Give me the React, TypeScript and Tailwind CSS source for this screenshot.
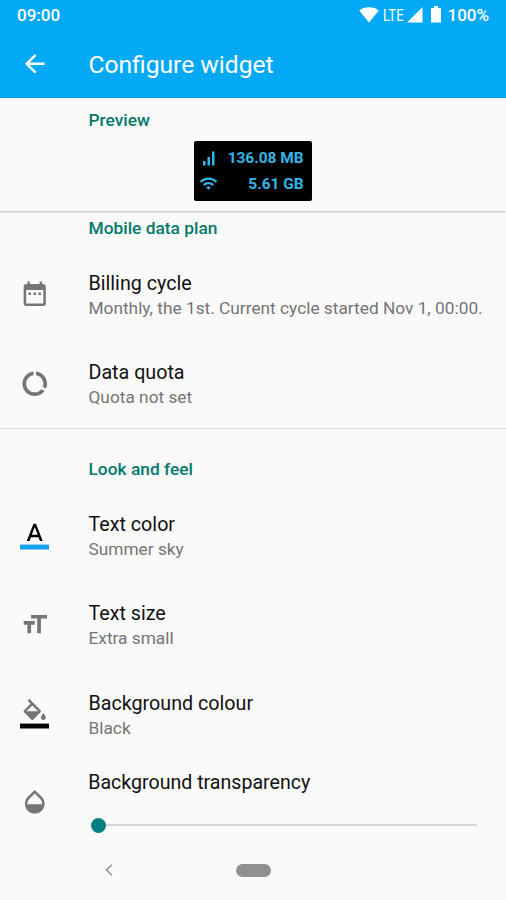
import type { ReactNode } from 'react';

interface PreferenceRowProps {
  icon: ReactNode;
  title: string;
  summary: string;
}

interface IconProps {
  path: string;
  className?: string;
}

const ICONS = {
  back: 'M20 11H7.83l5.59-5.59L12 4l-8 8 8 8 1.41-1.41L7.83 13H20v-2z',
  calendar:
    'M9 11H7v2h2v-2zm4 0h-2v2h2v-2zm4 0h-2v2h2v-2zm2-7h-1V2h-2v2H8V2H6v2H5c-1.11 0-1.99.9-1.99 2L3 20c0 1.1.89 2 2 2h14c1.1 0 2-.9 2-2V6c0-1.1-.9-2-2-2zm0 16H5V9h14v11z',
  dataUsage:
    'M13 2.05v3.03c3.39.49 6 3.39 6 6.92 0 .9-.18 1.75-.48 2.54l2.6 1.53c.56-1.24.88-2.62.88-4.07 0-5.18-3.95-9.45-9-9.95zM12 19c-3.87 0-7-3.13-7-7 0-3.53 2.61-6.43 6-6.92V2.05c-5.06.5-9 4.76-9 9.95 0 5.52 4.47 10 9.99 10 3.31 0 6.24-1.61 8.06-4.09l-2.6-1.53C16.17 17.98 14.21 19 12 19z',
  textSize: 'M9 4v3h5v12h3V7h5V4H9zm-6 8h3v7h3v-7h3V9H3v3z',
  opacity:
    'M17.66 8L12 2.35 6.34 8C4.78 9.56 4 11.64 4 13.64s.78 4.11 2.34 5.67 3.61 2.35 5.66 2.35 4.1-.79 5.66-2.35S20 15.64 20 13.64 19.22 9.56 17.66 8zM6 14c.01-2 .62-3.27 1.76-4.4L12 5.27l4.24 4.38C17.38 10.77 17.99 12 18 14H6z',
  fill: 'M16.56 8.94L7.62 0 6.21 1.41l2.38 2.38-5.15 5.15c-.59.59-.59 1.54 0 2.12l5.5 5.5c.29.29.68.44 1.06.44s.77-.15 1.06-.44l5.5-5.5c.59-.58.59-1.53 0-2.12zM5.21 10L10 5.21 14.79 10H5.21zM19 11.5s-2 2.17-2 3.5c0 1.1.9 2 2 2s2-.9 2-2c0-1.33-2-3.5-2-3.5z',
  wifi: 'M1 9l2 2c4.97-4.97 13.03-4.97 18 0l2-2C16.93 2.93 7.08 2.93 1 9zm8 8l3 3 3-3c-1.65-1.66-4.34-1.66-6 0zm-4-4l2 2c2.76-2.76 7.24-2.76 10 0l2-2C15.14 9.14 8.87 9.14 5 13z',
};

const Icon = ({ path, className = 'size-[29.5px]' }: IconProps) => (
  <svg viewBox="0 0 24 24" fill="currentColor" className={className}>
    <path d={path} />
  </svg>
);

const StatusBar = () => (
  <div className="flex h-[31px] items-center justify-between px-[17px] text-[17px] font-medium">
    <span>09:00</span>
    <div className="flex items-center">
      <svg viewBox="0 0 20 16" fill="currentColor" className="-mt-[2px] h-4 w-5">
        <path d="M10 15.5L.2 3.6C2.8 1.4 6.2.3 10 .3s7.2 1.1 9.8 3.3z" />
      </svg>
      <span className="ml-[4px] w-[21px] text-[16px] font-normal">
        <span className="inline-block origin-left scale-x-[0.82]">LTE</span>
      </span>
      <svg viewBox="0 0 16 16" fill="currentColor" className="-mt-[2px] ml-[3px] size-4">
        <path d="M0 15.5L15.5 0v15.5z" />
      </svg>
      <svg viewBox="0 0 10 17" fill="currentColor" className="-mt-[2px] ml-2 h-[17px] w-[10px]">
        <path d="M3 0h4v2h3v14.5H0V2h3z" />
      </svg>
      <span className="ml-[6px]">100%</span>
    </div>
  </div>
);

const Toolbar = () => (
  <div className="flex h-[67px] items-center pl-5">
    <Icon path={ICONS.back} className="-mt-px size-[29.5px]" />
    <h1 className="ml-[39px] pt-[2px] text-[24.6px]">Configure widget</h1>
  </div>
);

// Black home screen widget with mobile and wifi usage
const WidgetPreview = () => (
  <div className="ml-[194px] mt-[9px] flex h-[60px] w-[117.5px] flex-col rounded-[2px] bg-black pl-[5px] pr-[8px] pt-[5px] text-[15.5px] font-bold text-[#33b5e5]">
    <div className="flex h-[26px] items-center justify-between">
      <svg viewBox="0 0 18 18" fill="currentColor" className="-mt-px size-[18px]">
        <path d="M4 11h2.5v4.5H4zM8.5 7H11v8.5H8.5zM13 1.5h2.5v14H13z" />
      </svg>
      <span className="tracking-[-0.05px]">136.08 MB</span>
    </div>
    <div className="flex h-[26px] items-center justify-between">
      <Icon path={ICONS.wifi} className="-mt-[4px] size-[19px]" />
      <span className="tracking-[-0.05px]">5.61 GB</span>
    </div>
  </div>
);

const CategoryTitle = ({ children }: { children: ReactNode }) => (
  <h2 className="ml-[88.5px] text-[17.35px] font-medium leading-6 text-[#00796b]">{children}</h2>
);

const PreferenceRow = ({ icon, title, summary }: PreferenceRowProps) => (
  <div className="flex h-[89.5px] items-center pl-[19.7px] text-[#757575]">
    {icon}
    <div className="ml-[39.3px] whitespace-nowrap pt-[4px]">
      <div className="text-[19.7px] leading-[25px] text-[#111]">{title}</div>
      <div className="text-[17.3px] leading-[25px]">{summary}</div>
    </div>
  </div>
);

export default function App() {
  return (
    <div className="flex h-[900px] w-[506px] flex-col overflow-hidden bg-[#fafafa] font-['Roboto',sans-serif]">
      <header className="shrink-0 bg-[#03a9f4] text-white">
        <StatusBar />
        <Toolbar />
      </header>

      <section className="h-[113px] shrink-0 pt-[10px] shadow-[0_1px_2px_rgba(0,0,0,0.25)]">
        <CategoryTitle>Preview</CategoryTitle>
        <WidgetPreview />
      </section>

      <section className="h-[218px] shrink-0 border-b border-[#d9d9d9] pt-[5px]">
        <CategoryTitle>Mobile data plan</CategoryTitle>
        <div className="mt-[9px]">
          <PreferenceRow
            icon={<Icon path={ICONS.calendar} />}
            title="Billing cycle"
            summary="Monthly, the 1st. Current cycle started Nov 1, 00:00."
          />
          <PreferenceRow icon={<Icon path={ICONS.dataUsage} />} title="Data quota" summary="Quota not set" />
        </div>
      </section>

      <section className="shrink-0 pt-[28px]">
        <CategoryTitle>Look and feel</CategoryTitle>
        <div className="mt-[9px]">
          <PreferenceRow
            icon={
              <svg viewBox="0 0 24 24" className="size-[29.5px]">
                <path
                  fill="#000"
                  d="M11 3L5.5 17h2.25l1.12-3h6.25l1.12 3h2.25L13 3h-2zm-1.38 9L12 5.67 14.38 12H9.62z"
                />
                <path fill="#139eef" d="M0 20h24v4H0z" />
              </svg>
            }
            title="Text color"
            summary="Summer sky"
          />
          <PreferenceRow icon={<Icon path={ICONS.textSize} />} title="Text size" summary="Extra small" />
          <PreferenceRow
            icon={
              <svg viewBox="0 0 24 24" className="size-[29.5px]">
                <path fill="#757575" d={ICONS.fill} />
                <path fill="#000" d="M0 20h24v4H0z" />
              </svg>
            }
            title="Background colour"
            summary="Black"
          />
        </div>
        <div className="flex h-[86px] items-center pl-[19.7px] text-[#757575]">
          <Icon path={ICONS.opacity} />
          <div className="ml-[42px] pb-px">
            <div className="-ml-[3px] text-[19.6px] leading-[25px] text-[#111]">Background transparency</div>
            <div className="mt-[23px] flex h-[15px] items-center">
              <div className="size-[15px] rounded-full bg-[#008080]" />
              <div className="h-[2px] w-[371px] bg-[#d4d4d4]" />
            </div>
          </div>
        </div>
      </section>

      <nav className="flex h-[51px] shrink-0 items-center pl-[105px] text-[#909090]">
        <svg viewBox="0 0 8 12" fill="none" stroke="currentColor" strokeWidth="1.5" className="h-3 w-2">
          <path d="M7 .8L1.5 6 7 11.2" />
        </svg>
        <div className="ml-[123px] h-[13px] w-[35px] rounded-full bg-[#909090]" />
      </nav>
    </div>
  );
}
